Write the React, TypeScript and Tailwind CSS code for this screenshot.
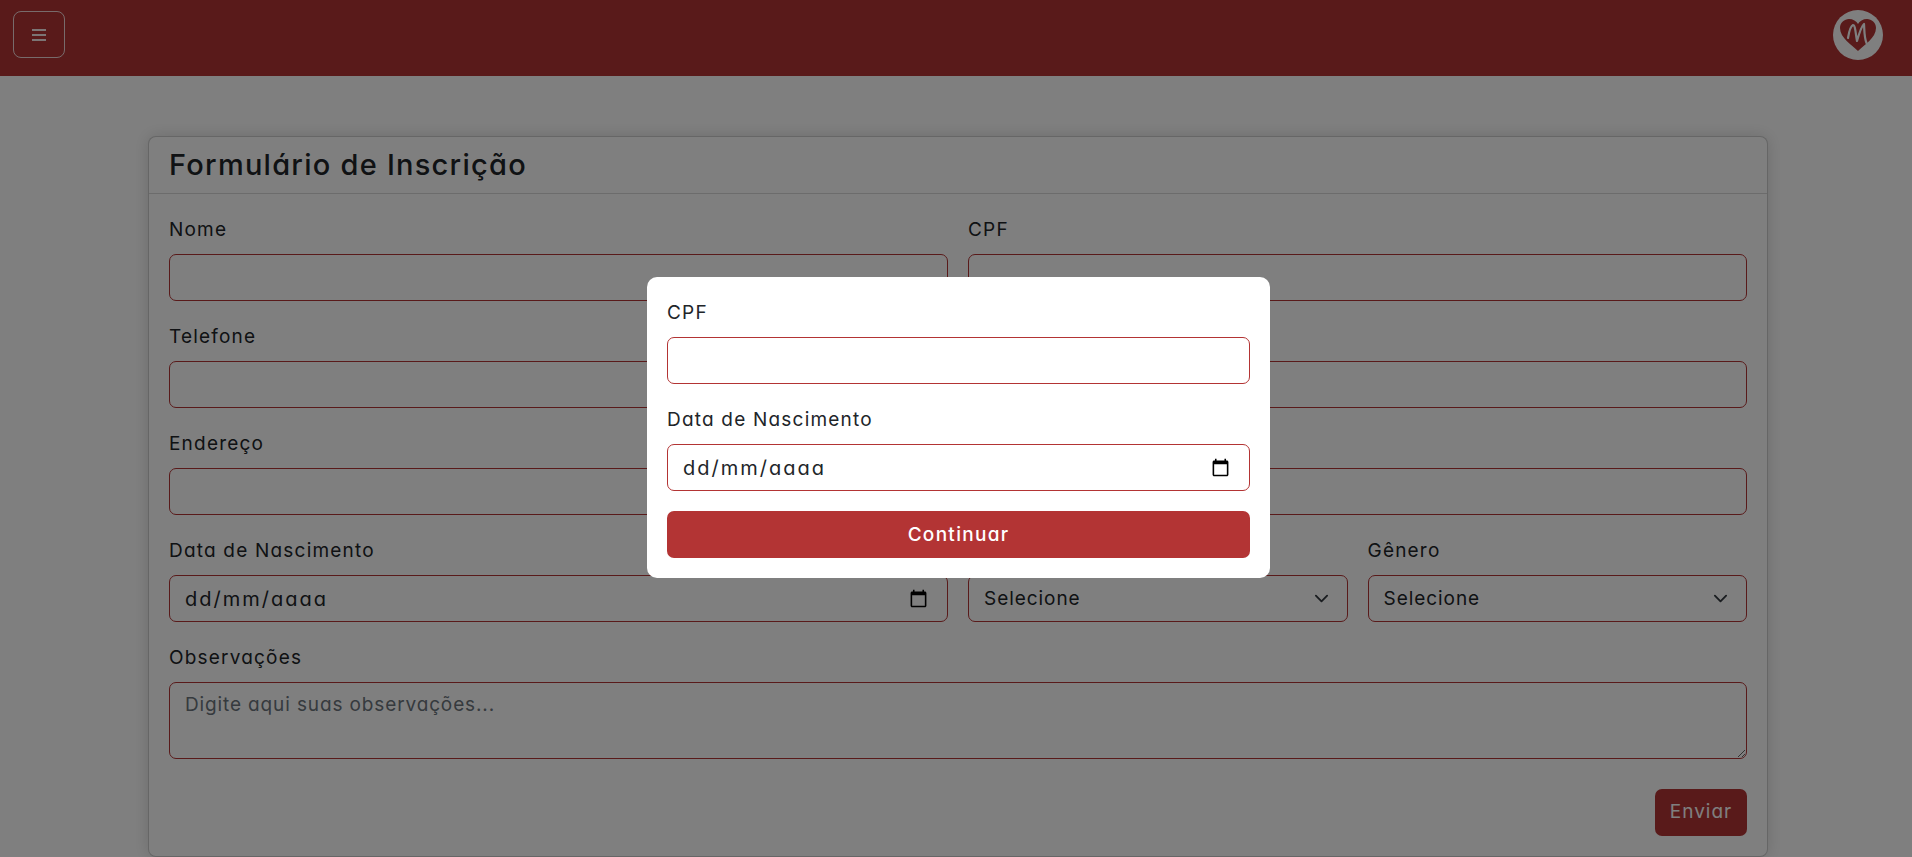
import type { ReactNode } from "react";

const ruby = "#b33434";

function Field({
	label,
	className = "",
	children,
}: {
	label?: string;
	className?: string;
	children: ReactNode;
}) {
	return (
		<div className={`flex flex-col ${className}`}>
			<label className="mt-[2px] mb-[11px] h-[27px] text-[19px] leading-[27px] tracking-[1.2px] text-[#212529]">
				{label}
			</label>
			{children}
		</div>
	);
}

function TextInput() {
	return (
		<input
			type="text"
			className="h-[47px] w-full rounded-[7px] border border-[#b33434] bg-white px-[15px] text-[19px] outline-none"
		/>
	);
}

function DateInput() {
	return (
		<div className="flex h-[47px] w-full items-center justify-between rounded-[7px] border border-[#b33434] bg-white pr-[19px] pl-[15px] text-[20px] tracking-[2px] text-[#212529]">
			<span>dd/mm/aaaa</span>
			<svg width="19" height="19" viewBox="0 0 24 24" fill="#000" aria-hidden="true">
				<path d="M20 3h-1V1h-2v2H7V1H5v2H4c-1.100 0-2 .9-2 2v16c0 1.100.9 2 2 2h16c1.100 0 2-.9 2-2V5c0-1.100-.9-2-2-2zm0 18H4V8h16v13z" />
			</svg>
		</div>
	);
}

function SelectInput() {
	return (
		<div className="relative">
			<select className="h-[47px] w-full appearance-none rounded-[7px] border border-[#b33434] bg-white px-[15px] pt-[2px] text-[19px] tracking-[0.95px] text-[#212529] outline-none">
				<option>Selecione</option>
			</select>
			<svg
				className="pointer-events-none absolute top-[16px] right-[19px]"
				width="15"
				height="15"
				viewBox="0 0 16 16"
				fill="none"
				stroke="#343a40"
				strokeWidth="2"
				strokeLinecap="round"
				strokeLinejoin="round"
				aria-hidden="true"
			>
				<path d="m2 5 6 6 6-6" />
			</svg>
		</div>
	);
}

function Logo() {
	return (
		<div className="flex h-[50px] w-[50px] items-center justify-center rounded-full bg-white">
			<svg width="36" height="32" viewBox="0 0 36 32" aria-hidden="true">
				<path
					d="M18 32C12 26 0 19 0 9C0 3.500 4.500 0 9 0C13 0 16.500 2 18 5C19.500 2 23 0 27 0C31.500 0 36 3.500 36 9C36 19 24 26 18 32Z"
					fill={ruby}
				/>
				<path
					d="M8 19C9 13 10.500 7 13 6C15.500 6 15.500 15 17 22C19 15 21.500 7 24 5C24.500 11 24 18 26.500 24"
					fill="none"
					stroke="#fff"
					strokeWidth="2.200"
					strokeLinecap="round"
					strokeLinejoin="round"
				/>
			</svg>
		</div>
	);
}

export default function App() {
	return (
		<div className="min-h-[857px] bg-white font-['Inter','Liberation_Sans',sans-serif] [font-feature-settings:'cv11']">
			<nav className="flex h-[76px] items-center justify-between bg-[#b33434] pr-[29px] pb-[7px] pl-[13px]">
				<button
					type="button"
					className="flex h-[47px] w-[52px] items-center justify-center rounded-[8px] border border-white/80"
				>
					<svg width="14" height="12" viewBox="0 0 14 12" stroke="#fff" strokeOpacity="0.9" strokeWidth="2" aria-hidden="true">
						<path d="M0 1h14M0 6h14M0 11h14" />
					</svg>
				</button>
				<Logo />
			</nav>

			<main className="pt-[60px] pr-[144px] pl-[148px]">
				<section className="rounded-lg border border-black/20 bg-white shadow-[0_0_16px_rgba(0,0,0,0.15)]">
					<header className="flex h-[57px] items-center border-b border-black/15 px-5">
						<h1 className="text-[29px] font-medium tracking-[1.250px] text-[#212529]">
							Formulário de Inscrição
						</h1>
					</header>
					<div className="flex flex-col gap-5 p-5">
						<div className="grid grid-cols-2 gap-5">
							<Field label="Nome"><TextInput /></Field>
							<Field label="CPF"><TextInput /></Field>
						</div>
						<div className="grid grid-cols-2 gap-5">
							<Field label="Telefone"><TextInput /></Field>
							<Field><TextInput /></Field>
						</div>
						<div className="grid grid-cols-2 gap-5">
							<Field label="Endereço"><TextInput /></Field>
							<Field><TextInput /></Field>
						</div>
						<div className="grid grid-cols-2 gap-5">
							<Field label="Data de Nascimento"><DateInput /></Field>
							<div className="grid grid-cols-2 gap-5">
								<Field><SelectInput /></Field>
								<Field label="Gênero"><SelectInput /></Field>
							</div>
						</div>
						<Field label="Observações">
							<textarea
								rows={2}
								placeholder="Digite aqui suas observações..."
								className="h-[77px] w-full rounded-[7px] border border-[#b33434] bg-white px-[15px] py-[8px] text-[19px] tracking-[0.87px] outline-none placeholder:text-[#6c757d]"
							/>
						</Field>
						<div className="flex justify-end pt-[10px]">
							<button
								type="button"
								className="h-[47px] w-[92px] rounded-[7px] bg-[#b33434] text-[19px] tracking-[1px] text-white"
							>
								Enviar
							</button>
						</div>
					</div>
				</section>
			</main>

			<div className="fixed inset-0 flex items-start justify-center bg-black/50 pt-[277px] pl-[5px]">
				<div className="flex w-[623px] flex-col gap-5 rounded-[10px] bg-white p-5">
					<Field label="CPF"><TextInput /></Field>
					<Field label="Data de Nascimento"><DateInput /></Field>
					<button
						type="button"
						className="h-[47px] w-full rounded-[7px] bg-[#b33434] pt-[2px] text-[19px] font-medium tracking-[1.300px] text-white"
					>
						Continuar
					</button>
				</div>
			</div>
		</div>
	);
}
